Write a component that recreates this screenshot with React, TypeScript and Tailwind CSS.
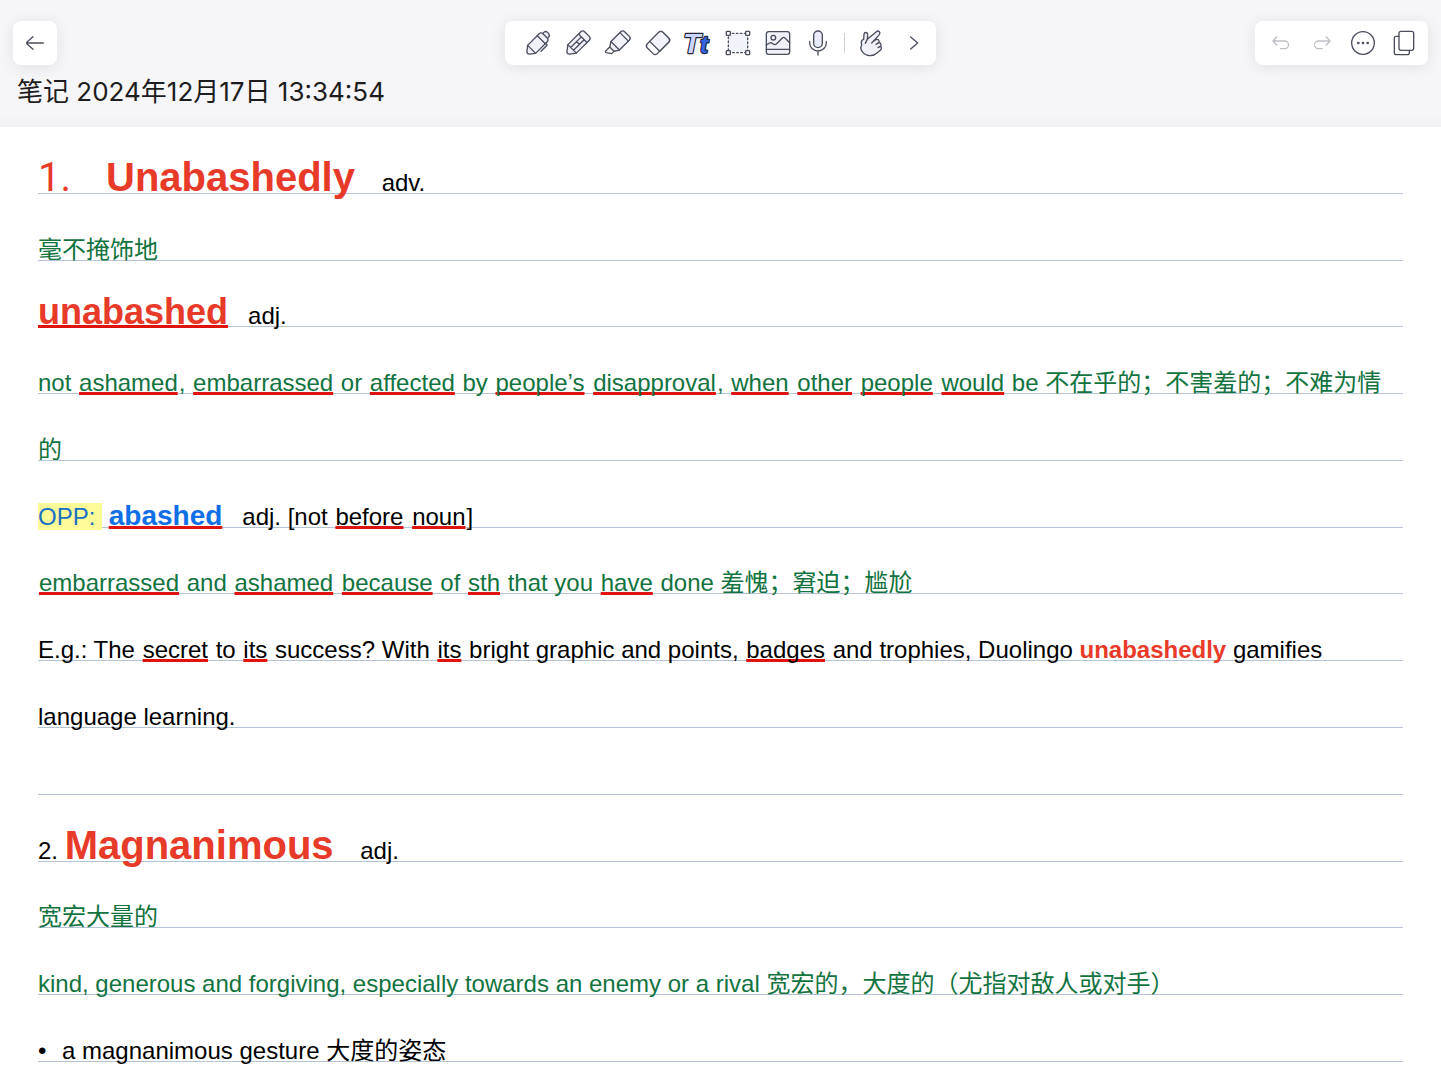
import type { ReactNode } from 'react';

function Icon({ children }: { children: ReactNode }) {
  return (
    <svg
      viewBox="0 0 72 72"
      className="h-6 w-6 overflow-visible"
      fill="none"
      stroke="#4b4e5e"
      strokeWidth="4"
      strokeLinecap="round"
      strokeLinejoin="round"
      aria-hidden="true"
    >
      {children}
    </svg>
  );
}

const tools = [
  {
    name: 'Pen',
    icon: (
      <Icon>
        <g transform="rotate(45 36 36)">
          <path d="M26 6V1a10 8 0 0 1 20 0v5" fill="#f1f3fb" />
          <path d="M19 63V14a8 8 0 0 1 8-8h18a8 8 0 0 1 8 8v49L41 78q-5 5-10 0z" fill="#f1f3fb" />
          <path d="M19 22h34M19 63h34M53 20h4a3 3 0 0 1 3 3v24" />
        </g>
      </Icon>
    ),
  },
  {
    name: 'Pencil',
    icon: (
      <Icon>
        <g transform="rotate(45 36 36)">
          <path d="M18 61V6a8 8 0 0 1 8-8h20a8 8 0 0 1 8 8v55L41 78q-5 5-10 0z" fill="#f1f3fb" />
          <path d="M18 16h36M18 61h36M30 16v45M42 16v45M30 36h12" />
        </g>
      </Icon>
    ),
  },
  {
    name: 'Highlighter',
    icon: (
      <Icon>
        <g transform="rotate(45 36 36)">
          <path d="M18 48V6a8 8 0 0 1 8-8h20a8 8 0 0 1 8 8v42l-9 14H27z" fill="#f1f3fb" />
          <path d="M18 10h36M18 48h36M27 62v16q0 6 5 3l13-9V62" />
        </g>
      </Icon>
    ),
  },
  {
    name: 'Eraser',
    icon: (
      <Icon>
        <g transform="rotate(45 36 36)">
          <rect x="15" y="3" width="42" height="66" rx="9" fill="#fff" />
          <path d="M15 50V12a9 9 0 0 1 9-9h24a9 9 0 0 1 9 9v38z" fill="#f1f3fb" />
        </g>
      </Icon>
    ),
  },
  {
    name: 'Text',
    icon: (
      <svg
        viewBox="0 0 72 72"
        className="h-6 w-6 overflow-visible font-['Liberation_Sans',sans-serif] font-bold italic"
        stroke="#23263a"
        strokeWidth="7"
        strokeLinejoin="round"
        paintOrder="stroke"
        aria-hidden="true"
      >
        <text x="-8" y="66" fontSize="84" fill="#cdd6fa">T</text>
        <text x="42" y="66" fontSize="72" fill="#3566e3">t</text>
      </svg>
    ),
  },
  {
    name: 'Select',
    icon: (
      <Icon>
        <rect x="7" y="7" width="58" height="58" fill="#f1f3fb" strokeDasharray="5 7" />
        <g fill="#fff">
          <rect x="1" y="1" width="12" height="12" rx="2" />
          <rect x="59" y="1" width="12" height="12" rx="2" />
          <rect x="1" y="59" width="12" height="12" rx="2" />
          <rect x="59" y="59" width="12" height="12" rx="2" />
        </g>
      </Icon>
    ),
  },
  {
    name: 'Image',
    icon: (
      <Icon>
        <rect x="1" y="2" width="70" height="68" rx="7" fill="#f1f3fb" />
        <circle cx="22" cy="20" r="7" />
        <path d="M1 42l10-6q4-2 8 1l5 3q4 2 7-1l18-18q4-4 8 0l14 14M1 55h70" />
      </Icon>
    ),
  },
  {
    name: 'Record',
    icon: (
      <Icon>
        <rect x="23" y="0" width="26" height="50" rx="13" fill="#e9edfb" />
        <path d="M11 32v3a25 25 0 0 0 50 0v-3M36 60v12" />
      </Icon>
    ),
  },
];

function HandIcon() {
  return (
    <Icon>
      <path
        d="M8 42l-1-8c0-5 3-8 7-9l1-15c1-8 11-7 11 1l-1 14L52 2c7-5 14 2 9 9L44 30l7-4c7-3 12 4 8 9 7 0 9 7 5 11 5 3 4 8 0 12L54 66C43 77 22 76 12 65 4 56 4 49 8 42z"
        fill="#f1f3fb"
      />
      <path d="M25 25l-6 12M44 30l-6 6M59 35l-8 5M64 46l-7 4" />
    </Icon>
  );
}

const redLine =
  'underline decoration-[#e0140f] decoration-[3px] underline-offset-[1px] [text-decoration-skip-ink:none]';

// word marked with a red pen stroke
function Mark({ children }: { children: ReactNode }) {
  return <span className={`px-px ${redLine}`}>{children}</span>;
}

function Line({ children, className = '' }: { children?: ReactNode; className?: string }) {
  return (
    <div className={`flex items-end border-b border-[#b4c3d6] ${className}`}>
      <p className="whitespace-pre text-[24px] leading-[20px]">{children}</p>
    </div>
  );
}

const green = 'text-[#12733f]';
const card = 'flex h-11 items-center rounded-lg bg-white shadow-[0_2px_16px_rgba(0,0,0,0.09)]';

export default function App() {
  return (
    <div className="flex min-h-screen flex-col overflow-x-hidden bg-white font-['Liberation_Sans','Noto_Sans_CJK_SC',sans-serif] text-black">
      <header className="bg-linear-to-b from-[#f6f6f9] from-90% to-[#f0f0f2] px-[13px] pt-[21px] pb-[18px]">
        <div className="grid grid-cols-[1fr_auto_1fr] items-center">
          <button type="button" aria-label="Back" className={`${card} w-11 justify-center`}>
            <Icon>
              <path d="M61 36H11M30 17L13 32q-4 4 0 8l17 15" />
            </Icon>
          </button>

          <nav className={`${card} pl-[13px] pr-px`}>
            {tools.map((tool) => (
              <button key={tool.name} type="button" aria-label={tool.name} className="flex h-11 w-10 items-center justify-center">
                {tool.icon}
              </button>
            ))}
            <span className="mx-1.5 h-5 w-px bg-[#cfd0d6]" />
            <button type="button" aria-label="Gesture" className="flex h-11 w-10 items-center justify-center">
              <HandIcon />
            </button>
            <button type="button" aria-label="More tools" className="flex h-11 w-11 items-center justify-center">
              <Icon>
                <path d="M29 18l21 18-21 18" />
              </Icon>
            </button>
          </nav>

          <div className={`${card} justify-self-end pl-[5px] pr-1`}>
            <button type="button" aria-label="Undo" className="flex h-11 w-[41px] items-center justify-center opacity-35">
              <Icon>
                <path d="M23 18L12 30l11 12M13 30h34a11 11 0 0 1 0 23H35" />
              </Icon>
            </button>
            <button type="button" aria-label="Redo" className="flex h-11 w-[41px] items-center justify-center opacity-35">
              <Icon>
                <path d="M49 18l11 12-11 12M59 30H25a11 11 0 0 0 0 23h12" />
              </Icon>
            </button>
            <button type="button" aria-label="More" className="flex h-11 w-[41px] items-center justify-center">
              <Icon>
                <circle cx="36" cy="36" r="34" />
                <g fill="#4b4e5e" stroke="none">
                  <circle cx="22" cy="36" r="4" />
                  <circle cx="36" cy="36" r="4" />
                  <circle cx="50" cy="36" r="4" />
                </g>
              </Icon>
            </button>
            <button type="button" aria-label="Pages" className="flex h-11 w-[41px] items-center justify-center">
              <Icon>
                <path d="M21 16h-8a6 6 0 0 0-6 6v43a6 6 0 0 0 6 6h33a6 6 0 0 0 6-6v-7" />
                <rect x="21" y="1" width="44" height="57" rx="6" />
              </Icon>
            </button>
          </div>
        </div>
        <h1 className="mt-2.5 pl-1 font-['Inter','Noto_Sans_CJK_SC',sans-serif] text-[26px] leading-[34px] text-[#1d1d20]">
          笔记 2024年12月17日 13:34:54
        </h1>
      </header>

      <main className="grid flex-1 auto-rows-fr px-[38px] pb-[18px]">
        <Line>
          <span className="inline-block w-[68px] font-['Roboto',sans-serif] text-[40px] leading-[0] text-[#e83a28]">1.</span>
          <b className="text-[40px] leading-[0] text-[#e83a28]">Unabashedly</b>
          {'    adv.'}
        </Line>
        <Line className={green}>毫不掩饰地</Line>
        <Line>
          <b className={`text-[36px] leading-[0] text-[#e83a28] ${redLine}`}>unabashed</b>
          {'   adj.'}
        </Line>
        <Line className={green}>
          not <Mark>ashamed</Mark>, <Mark>embarrassed</Mark> or <Mark>affected</Mark> by <Mark>people’s</Mark>{' '}
          <Mark>disapproval</Mark>, <Mark>when</Mark> <Mark>other</Mark> <Mark>people</Mark> <Mark>would</Mark> be
          {' 不在乎的；不害羞的；不难为情'}
        </Line>
        <Line className={green}>的</Line>
        <Line>
          <span className="bg-[#fdfb98] text-[#1a6fc4]">OPP: </span>{' '}
          <b className={`text-[28px] leading-[0] text-[#0f6fe6] ${redLine}`}>abashed</b>
          {'   adj. [not '}
          <Mark>before</Mark> <Mark>noun</Mark>]
        </Line>
        <Line className={green}>
          <Mark>embarrassed</Mark> and <Mark>ashamed</Mark> <Mark>because</Mark> of <Mark>sth</Mark> that you{' '}
          <Mark>have</Mark> done 羞愧；窘迫；尴尬
        </Line>
        <Line>
          E.g.: The <Mark>secret</Mark> to <Mark>its</Mark> success? With <Mark>its</Mark> bright graphic and points,{' '}
          <Mark>badges</Mark> and trophies, Duolingo <b className="text-[#e83a28]">unabashedly</b> gamifies
        </Line>
        <Line>language learning.</Line>
        <Line />
        <Line>
          {'2. '}
          <b className="text-[40px] leading-[0] text-[#e83a28]">Magnanimous</b>
          {'    adj.'}
        </Line>
        <Line className={green}>宽宏大量的</Line>
        <Line className={green}>
          kind, generous and forgiving, especially towards an enemy or a rival 宽宏的，大度的（尤指对敌人或对手）
        </Line>
        <Line>
          <span className="inline-block w-6">•</span>a magnanimous gesture 大度的姿态
        </Line>
      </main>
    </div>
  );
}
